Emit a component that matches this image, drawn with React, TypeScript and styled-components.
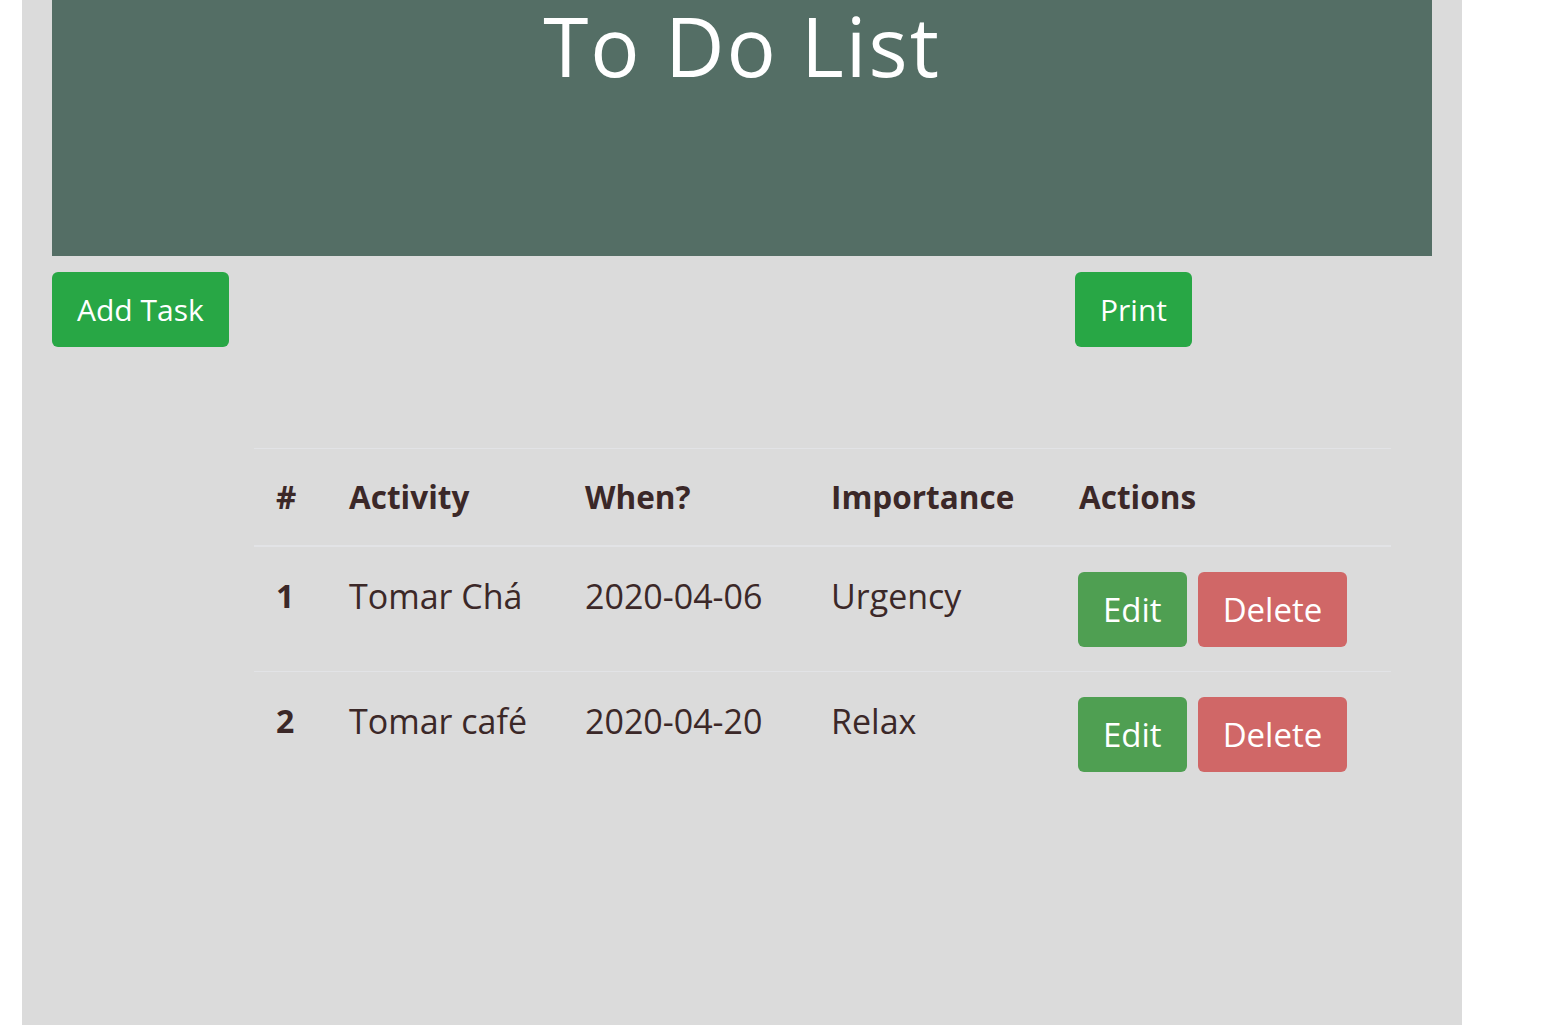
import React from 'react'
import styled, { createGlobalStyle } from 'styled-components'

const GlobalStyle = createGlobalStyle`
    html, body {
        margin: 0;
        padding: 0;
        background: #ffffff;
    }
    body {
        font-family: "Open Sans", "Noto Sans", sans-serif;
        color: #3b2828;
    }
    * {
        box-sizing: border-box;
    }
`

const colors = {
    page: '#dbdbdb',
    banner: '#546e65',
    success: '#28a745',
    edit: '#4f9f52',
    danger: '#d06767',
    border: '#e2e3e6',
    text: '#3b2828',
}

const Page = styled.div`
    margin-left: 22px;
    width: 1440px;
    min-height: 1025px;
    background: ${colors.page};
    padding: 0 30px;
`

const Banner = styled.header`
    height: 256px;
    background: ${colors.banner};
    padding-top: 4px;
    text-align: center;

    h1 {
        margin: 0;
        font-size: 82px;
        font-weight: 400;
        line-height: 1;
        color: #ffffff;
        letter-spacing: 2px;
    }
`

const Toolbar = styled.div`
    display: grid;
    grid-template-columns: 1023px auto;
    justify-items: start;
    margin-top: 16px;
`

const Button = styled.button<{ $variant: 'success' | 'edit' | 'danger'; $size?: number }>`
    height: 75px;
    padding: 0 25px;
    border: none;
    border-radius: 6px;
    font-family: "Open Sans", "Noto Sans", sans-serif;
    font-size: ${({ $size }) => $size || 30}px;
    line-height: 75px;
    color: #ffffff;
    cursor: pointer;
    background: ${({ $variant }) => colors[$variant]};
`

const TableWrap = styled.div`
    margin: 101px 0 0 202px;
    width: 1137px;
`

const Table = styled.table`
    width: 100%;
    border-collapse: collapse;
    color: ${colors.text};
    font-size: 34px;

    th, td {
        padding: 25px 22px 24px;
        line-height: 48px;
        text-align: left;
        vertical-align: top;
        border-top: 1px solid ${colors.border};
    }

    thead th {
        padding: 24px 22px;
        font-size: 31.5px;
        font-weight: 700;
        border-bottom: 2px solid ${colors.border};
    }

    tbody th {
        font-size: 32px;
        font-weight: 700;
    }

    tbody tr:first-child td, tbody tr:first-child th {
        border-top: none;
    }
`

const Actions = styled.div`
    display: flex;
    gap: 11px;
`

const tasks = [
    { id: 1, activity: 'Tomar Chá', when: '2020-04-06', importance: 'Urgency' },
    { id: 2, activity: 'Tomar café', when: '2020-04-20', importance: 'Relax' },
]

const widths = [73, 236, 246, 248, 334]

const App = () => {
    const labels = ['#', 'Activity', 'When?', 'Importance', 'Actions']
    return (
        <>
            <GlobalStyle />
            <Page>
                <Banner>
                    <h1>To Do List</h1>
                </Banner>
                <Toolbar>
                    <Button $variant="success">Add Task</Button>
                    <Button $variant="success">Print</Button>
                </Toolbar>
                <TableWrap>
                    <Table>
                        <colgroup>
                            {widths.map((w, i) => <col key={i} style={{ width: w }} />)}
                        </colgroup>
                        <thead>
                            <tr>
                                {labels.map((label, index) => <th key={index}>{label}</th>)}
                            </tr>
                        </thead>
                        <tbody>
                            {tasks.map(task =>
                                <tr key={task.id}>
                                    <th>{task.id}</th>
                                    <td>{task.activity}</td>
                                    <td>{task.when}</td>
                                    <td>{task.importance}</td>
                                    <td style={{ paddingLeft: 21 }}>
                                        <Actions>
                                            <Button $variant="edit" $size={33}>Edit</Button>
                                            <Button $variant="danger" $size={33}>Delete</Button>
                                        </Actions>
                                    </td>
                                </tr>
                            )}
                        </tbody>
                    </Table>
                </TableWrap>
            </Page>
        </>
    )
}

export default App
